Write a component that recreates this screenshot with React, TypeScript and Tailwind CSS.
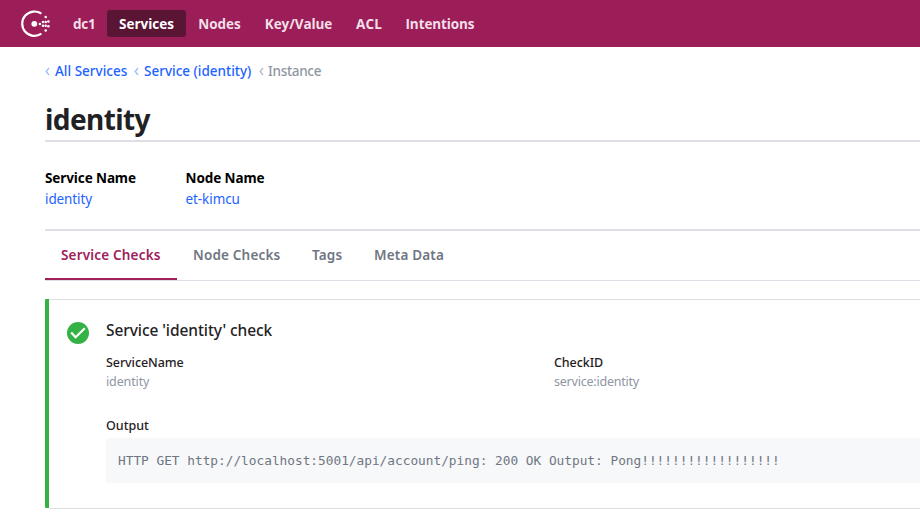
const navItems = [
  { label: "Services", box: "w-[79px] ml-[11px] bg-[#5a1434] text-white rounded-[3px]" },
  { label: "Nodes", box: "w-[67px] text-[#f3dfe9]" },
  { label: "Key/Value", box: "w-[91px] text-[#f3dfe9] tracking-[-0.08px]" },
  { label: "ACL", box: "w-[50px] text-[#f3dfe9] tracking-[0.1px]" },
  { label: "Intentions", box: "w-[92px] text-[#f3dfe9] tracking-[-0.1px]" },
];

const tabs = [
  { label: "Service Checks", box: "w-[132px] border-b-2 border-[#9e2159] text-[#9e2159]" },
  { label: "Node Checks", box: "w-[119px] text-[#6f7682]" },
  { label: "Tags", box: "w-[62px] text-[#6f7682]" },
  { label: "Meta Data", box: "w-[102px] text-[#6f7682]" },
];

function Logo() {
  const dots: [number, number][] = [
    [18.9, 13.9], [22, 12], [22, 15.8], [24.7, 7], [24.7, 12],
    [24.7, 15.8], [24.7, 20.4], [27.4, 11.4], [27.4, 16.2],
  ];
  return (
    <svg className="ml-[21px] h-7 w-[29px] shrink-0" viewBox="0 0 29 28" fill="white">
      <path d="M20.4 3.7A12.2 12.2 0 1 0 20.4 23.7" fill="none" stroke="white" strokeWidth="2.2" />
      <circle cx="13.3" cy="13.8" r="2.9" />
      {dots.map(([x, y]) => (
        <circle key={`${x}-${y}`} cx={x} cy={y} r="1.25" />
      ))}
    </svg>
  );
}

function Chevron({ color }: { color: string }) {
  return (
    <svg className="h-[9px] w-[5px] shrink-0" viewBox="0 0 5 9" fill="none" stroke={color} strokeWidth="1.3">
      <path d="M4 1L1.2 4.5L4 8" />
    </svg>
  );
}

function Field({ label, value, tight }: { label: string; value: string; tight?: boolean }) {
  return (
    <div className="w-[448px] shrink-0 text-[12.5px]">
      <div className="h-[19px] font-medium leading-[19px] tracking-[-0.08px] text-[#1f2124]">{label}</div>
      <div className={`h-[19px] leading-[19px] text-[#8e96a3] ${tight ? "tracking-[-0.22px]" : "tracking-[-0.12px]"}`}>{value}</div>
    </div>
  );
}

export default function App() {
  return (
    <div className="h-[520px] w-[920px] overflow-hidden bg-white font-['Noto_Sans','Open_Sans',sans-serif]">
      <header className="flex h-[47px] items-center bg-[#9c1e58] font-['Open_Sans',sans-serif] text-[13.5px] font-bold">
        <Logo />
        <span className="ml-[23px] w-[23px] whitespace-nowrap pt-[2px] tracking-[-0.2px] text-[#f3dfe9]">dc1</span>
        <nav className="flex">
          {navItems.map((n) => (
            <a key={n.label} className={`flex h-[27px] items-center justify-center whitespace-nowrap pt-[2px] ${n.box}`}>
              {n.label}
            </a>
          ))}
        </nav>
      </header>

      <main className="pl-[45px]">
        <div className="flex h-[49px] items-center whitespace-nowrap text-[13.5px] font-medium text-[#1c63ff]">
          <Chevron color="#9dbcff" />
          <span className="ml-[5px] w-[79px]">All Services</span>
          <Chevron color="#9dbcff" />
          <span className="ml-[5px] w-[114.5px]">Service (identity)</span>
          <Chevron color="#b4bac4" />
          <span className="ml-[4.5px] tracking-[-0.3px] text-[#8e96a3]">Instance</span>
        </div>

        <h1 className="h-[46px] border-b-2 border-[#dce0e6] text-[28px] font-bold leading-[46px] tracking-[-0.58px] text-[#1f2124]">
          identity
        </h1>

        <section className="flex h-[89px] border-b-2 border-[#dce0e6] pt-[26px]">
          <div className="w-[140.5px]">
            <div className="h-[21px] text-[13.5px] font-bold leading-[21px] tracking-[-0.1px] text-black">Service Name</div>
            <a className="block h-[21px] text-[13.5px] leading-[21px] tracking-[-0.1px] text-[#1c63ff]">identity</a>
          </div>
          <div>
            <div className="h-[21px] text-[13.5px] font-bold leading-[21px] tracking-[-0.1px] text-black">Node Name</div>
            <a className="block h-[21px] text-[13.5px] leading-[21px] tracking-[-0.08px] text-[#1c63ff]">et-kimcu</a>
          </div>
        </section>

        <nav className="flex h-[50px] border-b border-[#dce0e6] text-[13.5px] font-semibold tracking-[0.18px]">
          {tabs.map((t) => (
            <a key={t.label} className={`h-[49px] whitespace-nowrap pl-4 leading-[48px] ${t.box}`}>
              {t.label}
            </a>
          ))}
        </nav>

        <article className="mt-[18px] flex h-[210px]">
          <div className="h-[209px] w-1 shrink-0 rounded-l-[1px] bg-[#35b246]" />
          <div className="flex grow border-y border-[#dce0e6]">
            <svg className="ml-[18px] mt-[22px] h-[22px] w-[22px] shrink-0" viewBox="0 0 22 22">
              <circle cx="11" cy="11" r="11" fill="#35b246" />
              <path d="M4.2 10.6L8.6 15.2L17.8 6.2" fill="none" stroke="white" strokeWidth="2.2" />
            </svg>
            <div className="ml-[17px] w-[814px] shrink-0">
              <h2 className="mt-[18px] h-6 whitespace-nowrap text-[15.5px] font-medium leading-6 tracking-[-0.08px] text-[#1f2124]">
                Service 'identity' check
              </h2>
              <div className="mt-[11px] flex">
                <Field label="ServiceName" value="identity" />
                <Field label="CheckID" value="service:identity" tight />
              </div>
              <div className="mt-[25px] h-[19px] text-[12.5px] font-medium leading-[19px] text-[#1f2124]">Output</div>
              <pre className="mt-[3px] h-[45px] rounded-l-[3px] bg-[#f7f8fa] pl-3 font-['DejaVu_Sans_Mono',monospace] text-[12.8px] leading-[45px] tracking-[-0.01px] text-[#6f7682]">
                HTTP GET http://localhost:5001/api/account/ping: 200 OK Output: Pong!!!!!!!!!!!!!!!!!!
              </pre>
            </div>
          </div>
        </article>
      </main>
    </div>
  );
}
